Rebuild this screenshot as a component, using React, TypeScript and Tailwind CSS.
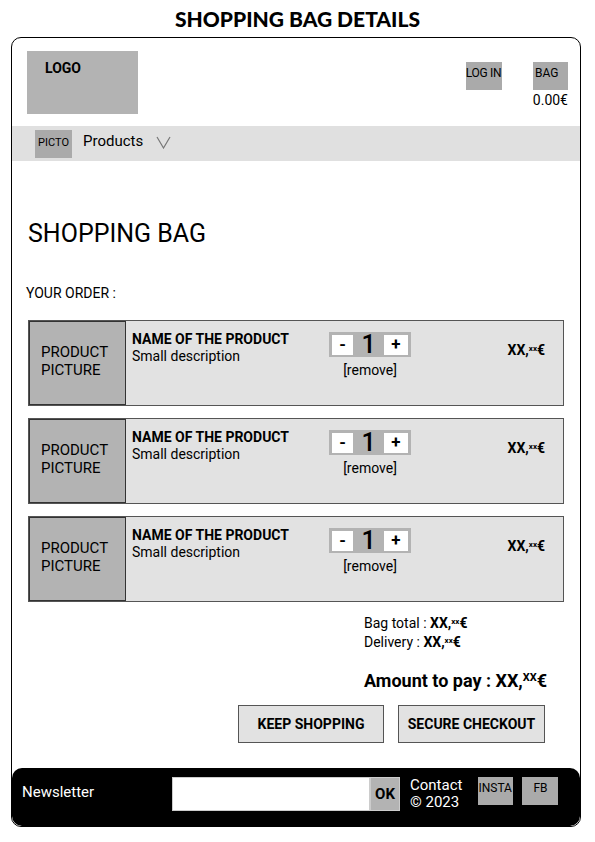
const items = [1, 2, 3];

function Price() {
  return (
    <span className="font-bold">
      XX,<span className="text-[8px] align-[4px]">xx</span>€
    </span>
  );
}

function ProductRow() {
  return (
    <div className="flex h-[86px] border-[1.5px] border-[#555] bg-[#e2e2e2]">
      <div className="flex w-[97px] flex-col justify-center border border-[#333] bg-[#b3b3b3] pb-[4px] pl-[11px] text-[15px] leading-[18px] text-black">
        <span>PRODUCT</span>
        <span>PICTURE</span>
      </div>
      <div className="w-[203px] pl-[6px] pt-[10px] text-[14px] leading-[17px] text-black">
        <p className="font-bold">NAME OF THE PRODUCT</p>
        <p>Small description</p>
      </div>
      <div className="flex flex-col items-center pt-[11px]">
        <div className="flex h-[25px] w-[82px] items-center justify-between bg-[#b3b3b3] px-[3px]">
          <span className="flex h-[20px] w-[21px] items-center justify-center bg-white text-[17px] font-bold leading-none">-</span>
          <span className="text-[25px] font-medium leading-none">1</span>
          <span className="flex h-[20px] w-[24px] items-center justify-center bg-white text-[17px] font-bold leading-none">+</span>
        </div>
        <span className="mt-[5px] text-[14px] leading-[16px]">[remove]</span>
      </div>
      <div className="ml-auto pr-[18px] pt-[20px] text-[14px] leading-[16px]">
        <Price />
      </div>
    </div>
  );
}

export default function App() {
  return (
    <main className="min-h-screen w-[595px] bg-white font-['Roboto',sans-serif] text-black">
      <h1 className="pt-[7px] text-center font-['Lato',sans-serif] text-[21px] font-black leading-[24px]">
        SHOPPING BAG DETAILS
      </h1>

      <div className="ml-[11px] mt-[6px] flex h-[790px] w-[570px] flex-col overflow-hidden rounded-[10px] border-[1.5px] border-black">
        {/* Header */}
        <div className="flex h-[88px] justify-between pl-[15px] pr-[12px] pt-[13px]">
          <div className="h-[63px] w-[111px] bg-[#b3b3b3] pl-[18px] pt-[9px] text-[14px] font-bold leading-[16px]">
            LOGO
          </div>
          <div className="flex gap-[31px] pt-[11px]">
            <div className="h-[28px] w-[36px] whitespace-nowrap bg-[#aaa] pt-[4px] text-[12px] leading-[14px] tracking-[-0.3px]">
              LOG IN
            </div>
            <div className="flex flex-col items-end">
              <div className="h-[28px] w-[35px] bg-[#aaa] pl-[2px] pt-[4px] text-[12px] leading-[14px]">BAG</div>
              <span className="mt-[2px] text-[14px] leading-[16px]">0.00€</span>
            </div>
          </div>
        </div>

        {/* Nav */}
        <div className="flex h-[35px] items-center bg-[#e0e0e0] pl-[23px]">
          <div className="flex h-[28px] w-[37px] items-center justify-center bg-[#aaa] text-[11px]">PICTO</div>
          <span className="-mt-[4px] ml-[11px] text-[15px]">Products</span>
          <svg className="-mt-[2px] ml-[13px]" width="15" height="13" viewBox="0 0 15 13" fill="none">
            <path d="M1 1 L7.5 12 L14 1" stroke="#777" strokeWidth="1.2" />
          </svg>
        </div>

        {/* Content */}
        <div className="flex flex-1 flex-col px-[16px]">
          <h2 className="mt-[58px] text-[25px] leading-[30px]">SHOPPING BAG</h2>
          <p className="-ml-[2px] mt-[36px] text-[14px] leading-[16px]">YOUR ORDER :</p>

          <div className="mt-[19px] flex flex-col gap-[12px]">
            {items.map((i) => (
              <ProductRow key={i} />
            ))}
          </div>

          <div className="ml-[336px] mt-[11px] text-[14px] leading-[18px]">
            <p>
              Bag total : <Price />
            </p>
            <p>
              Delivery : <Price />
            </p>
          </div>

          <p className="ml-[336px] mt-[16px] whitespace-nowrap text-[18px] font-bold leading-[22px]">
            Amount to pay : XX,<span className="text-[11px] align-[6px]">XX</span>€
          </p>

          <div className="ml-[210px] mt-[13px] flex gap-[14px]">
            <button className="h-[38px] w-[146px] border border-[#555] bg-[#e2e2e2] text-[14px] font-bold">KEEP SHOPPING</button>
            <button className="h-[38px] w-[147px] border border-[#555] bg-[#e2e2e2] text-[14px] font-bold">SECURE CHECKOUT</button>
          </div>

          <div className="flex-1" />
        </div>

        {/* Footer */}
        <div className="flex h-[58px] items-start rounded-[10px] bg-black pt-[9px] text-white">
          <span className="ml-[10px] mt-[6px] w-[150px] text-[15px] leading-[18px]">Newsletter</span>
          <div className="h-[34px] w-[198px] border border-[#ccc] bg-white" />
          <div className="flex h-[34px] w-[30px] items-center justify-center border border-[#ccc] bg-[#b3b3b3] text-[15px] font-bold text-black">
            OK
          </div>
          <div className="ml-[10px] text-[15px] leading-[17px]">
            <p>Contact</p>
            <p>© 2023</p>
          </div>
          <div className="ml-[16px] h-[28px] w-[35px] bg-[#aaa] pt-[4px] text-[12px] leading-[14px] text-black">INSTA</div>
          <div className="ml-[9px] flex h-[28px] w-[36px] justify-center bg-[#aaa] pt-[4px] text-[12px] leading-[14px] text-black">FB</div>
        </div>
      </div>
    </main>
  );
}
